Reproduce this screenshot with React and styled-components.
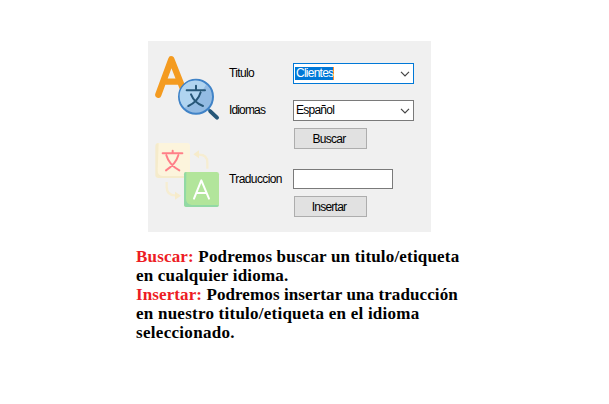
import React from 'react';
import styled, { createGlobalStyle } from 'styled-components';

const GlobalStyle = createGlobalStyle`
  * { box-sizing: border-box; }
  body { margin: 0; background: #fff; overflow: hidden; }
`;

const Page = styled.main`
  width: 609px;
  height: 404px;
  padding: 41px 0 0 136px;
`;

const Panel = styled.section`
  display: flex;
  width: 283px;
  height: 191px;
  margin-left: 12px;
  background: #f0f0f0;
  font: 12px/13px 'Liberation Sans', Arial, sans-serif;
  color: #000;
`;

const IconColumn = styled.div`
  display: flex;
  flex-direction: column;
  width: 81px;
  height: 180px;
`;

const Icon = styled.svg`
  display: block;
  width: 80px;
  height: 90px;
`;

const Form = styled.div`
  display: flex;
  flex-direction: column;
  padding-top: 22px;
`;

const Row = styled.div`
  display: grid;
  grid-template-columns: 64px 121px;
  margin-bottom: ${(p) => p.$gap}px;
`;

const Label = styled.label`
  padding-top: 4px;
  letter-spacing: ${(p) => p.$spacing || 0}px;
`;

const Combo = styled.div`
  display: flex;
  align-items: center;
  justify-content: space-between;
  height: 21px;
  padding: 0 3px 0 1px;
  border: 1px solid ${(p) => (p.$focused ? '#0078d7' : '#7a7a7a')};
  background: #fff;
`;

const Value = styled.span`
  height: 13px;
  padding-left: 1px;
  letter-spacing: ${(p) => p.$spacing || 0}px;
  color: ${(p) => (p.$selected ? '#fff' : '#000')};
  background: ${(p) => (p.$selected ? '#0078d7' : 'transparent')};
  border-right: 1px solid ${(p) => (p.$selected ? '#ff8728' : 'transparent')};
`;

const Chevron = styled.svg`
  width: 10px;
  height: 6px;
`;

const TextInput = styled.input`
  width: 100px;
  height: 20px;
  padding: 0 3px;
  border: 1px solid #7a7a7a;
  border-radius: 0;
  background: #fff;
  outline: none;
`;

const Button = styled.button`
  grid-column: 2;
  width: 73px;
  height: 21px;
  margin: 0 0 0 1px;
  padding: 1px 3px 0 0;
  border: 1px solid #adadad;
  border-radius: 0;
  background: #e1e1e1;
  color: #000;
  font: inherit;
  letter-spacing: ${(p) => p.$spacing || 0}px;
`;

const Notes = styled.section`
  margin-top: 15px;
  font: bold 17px/19px 'Liberation Serif', 'Times New Roman', serif;
  color: #000;
`;

const Line = styled.div`
  white-space: nowrap;
  letter-spacing: ${(p) => p.$spacing || 0}px;
`;

const Term = styled.span`
  color: #ed1c24;
`;

function Arrow() {
  return (
    <Chevron viewBox="0 0 10 6" fill="none" stroke="#444" strokeWidth="1.2">
      <path d="M1 .8 5 4.8 9 .8" />
    </Chevron>
  );
}

function SearchLanguageIcon() {
  return (
    <Icon viewBox="0 3 240 270" fill="none" strokeLinecap="round" strokeLinejoin="round">
      <path d="M31 164 70 58 108 154M51 125H92" stroke="#f49b20" strokeWidth="19" />
      <path d="m181 208 10 9" stroke="#4082c0" strokeWidth="8" />
      <path d="m187 214 20 19" stroke="#275778" strokeWidth="12" />
      <circle cx="144" cy="170" r="51" fill="#93bbe3" stroke="#4083c7" strokeWidth="6" />
      <path d="M110 203A47 47 0 0 1 174 134Q150 180 110 203Z" fill="#b0d4f0" />
      <path
        d="M144 137v13M116 151h55M129 163c6 15 18 28 36 35M158 157c-6 20-18 33-37 41"
        stroke="#275778"
        strokeWidth="6"
      />
    </Icon>
  );
}

function TranslateIcon() {
  return (
    <Icon viewBox="0 -12 240 270" fill="none" strokeLinecap="round" strokeLinejoin="round">
      <rect x="24" y="24" width="102" height="105" rx="8" fill="#fcf4dc" />
      <path d="M32 24Q22 24 22 34V121Q22 129 32 129H108V123H44Q29 121 29 108Z" fill="#f5ebcb" />
      <path
        d="M74 47v8M44 55h59M55 61c6 21 20 35 39 45M91 61c-6 21-21 35-37 45"
        stroke="#ff7f88"
        strokeWidth="6"
      />
      <path
        d="M178 101V83Q178 59 153 59H145M56 141v15q0 25 26 25h9"
        stroke="#f6edd2"
        strokeWidth="7"
        strokeLinecap="butt"
      />
      <path d="m136 58 17-12v24ZM99 182 81 170v24Z" fill="#f6ebcb" />
      <rect x="108" y="111" width="105" height="105" rx="7" fill="#b2e59b" />
      <path d="M115 111Q108 111 108 118V208Q108 216 116 216H206Q212 216 212 210H131Q114 207 114 191Z" fill="#92d9a4" />
      <path d="m138 191 22-55 23 55M145 174h31" stroke="#fff" strokeWidth="6" />
    </Icon>
  );
}

export default function App() {
  return (
    <>
      <GlobalStyle />
      <Page>
        <Panel>
          <IconColumn>
            <SearchLanguageIcon />
            <TranslateIcon />
          </IconColumn>
          <Form>
            <Row $gap={16}>
              <Label $spacing={-0.65}>Titulo</Label>
              <Combo $focused>
                <Value $selected $spacing={-0.75}>Clientes</Value>
                <Arrow />
              </Combo>
            </Row>
            <Row $gap={7}>
              <Label $spacing={-0.85}>Idiomas</Label>
              <Combo>
                <Value $spacing={-0.75}>Español</Value>
                <Arrow />
              </Combo>
            </Row>
            <Row $gap={20}>
              <Button type="button" $spacing={-0.7}>Buscar</Button>
            </Row>
            <Row $gap={7}>
              <Label htmlFor="traduccion" $spacing={-0.6}>Traduccion</Label>
              <TextInput id="traduccion" />
            </Row>
            <Row $gap={0}>
              <Button type="button" $spacing={-0.75}>Insertar</Button>
            </Row>
          </Form>
        </Panel>
        <Notes>
          <Line $spacing={0.18}><Term>Buscar:</Term> Podremos buscar un titulo/etiqueta</Line>
          <Line $spacing={0.2}>en cualquier idioma.</Line>
          <Line $spacing={0.1}><Term>Insertar:</Term> Podremos insertar una traducción</Line>
          <Line $spacing={0.24}>en nuestro titulo/etiqueta en el idioma</Line>
          <Line $spacing={0.3}>seleccionado.</Line>
        </Notes>
      </Page>
    </>
  );
}
